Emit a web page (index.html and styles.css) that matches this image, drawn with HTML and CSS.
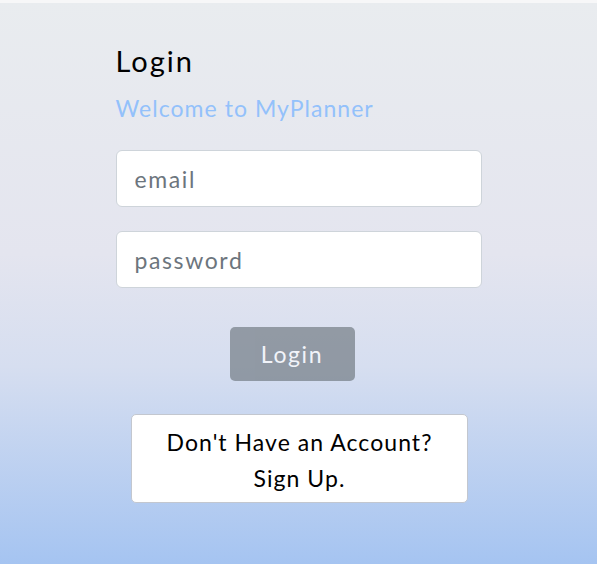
FILE: index.html
```html
<!DOCTYPE html>
<html lang="en">
<head>
<meta charset="utf-8">
<title>MyPlanner Login</title>
<link rel="stylesheet" href="styles.css">
</head>
<body>
<div class="topbar"></div>
<main class="page">
  <form class="login">
    <h1 class="title">Login</h1>
    <p class="welcome">Welcome to MyPlanner</p>
    <input class="field" type="email" placeholder="email">
    <input class="field" type="password" placeholder="password">
    <div class="actions">
      <button class="btn-login" type="button" disabled>Login</button>
    </div>
    <a class="signup" href="#">Don't Have an Account?<br>Sign Up.</a>
  </form>
</main>
</body>
</html>
```

FILE: styles.css
```css
html, body {
  margin: 0;
  padding: 0;
}
body {
  font-family: "Lato", "Open Sans", sans-serif;
  letter-spacing: 0.065em;
  min-height: 564px;
  background: linear-gradient(to bottom, #e9ecef 0%, #e4e5ef 45%, #d6def0 65%, #a5c4f1 100%);
}
.topbar {
  height: 3px;
  background: #f7f7f8;
}
.page {
  display: flex;
  justify-content: center;
  padding-top: 40px;
}
.login {
  width: 366px;
  display: flex;
  flex-direction: column;
}
.title {
  margin: 0;
  font-weight: 400;
  font-size: 29px;
  line-height: 36px;
  letter-spacing: 0.07em;
  color: #000;
}
.welcome {
  margin: 14px 0 0;
  font-size: 23px;
  line-height: 30px;
  color: #93c1fb;
}
.field {
  box-sizing: border-box;
  width: 366px;
  height: 57px;
  margin-top: 24px;
  padding: 0 18px;
  border: 1px solid #ced4da;
  border-radius: 6px;
  background: #fff;
  font-family: inherit;
  letter-spacing: 0.07em;
  font-size: 23px;
  color: #212529;
  outline: none;
}
.field:first-of-type {
  margin-top: 27px;
}
.field::placeholder {
  color: #6c757d;
}
.actions {
  display: flex;
  justify-content: center;
  margin-top: 39px;
  padding-right: 13px;
}
.btn-login {
  width: 125px;
  height: 54px;
  border: none;
  border-radius: 5px;
  background: #6c757d;
  opacity: 0.65;
  color: #fff;
  font-family: inherit;
  letter-spacing: 0.07em;
  font-size: 23px;
}
.signup {
  align-self: center;
  box-sizing: border-box;
  width: 337px;
  height: 89px;
  margin-top: 33px;
  margin-left: 2px;
  padding-top: 9px;
  border: 1px solid #c3c7cf;
  border-radius: 5px;
  background: #fff;
  color: #000;
  text-decoration: none;
  text-align: center;
  font-size: 23px;
  line-height: 36px;
}
```
